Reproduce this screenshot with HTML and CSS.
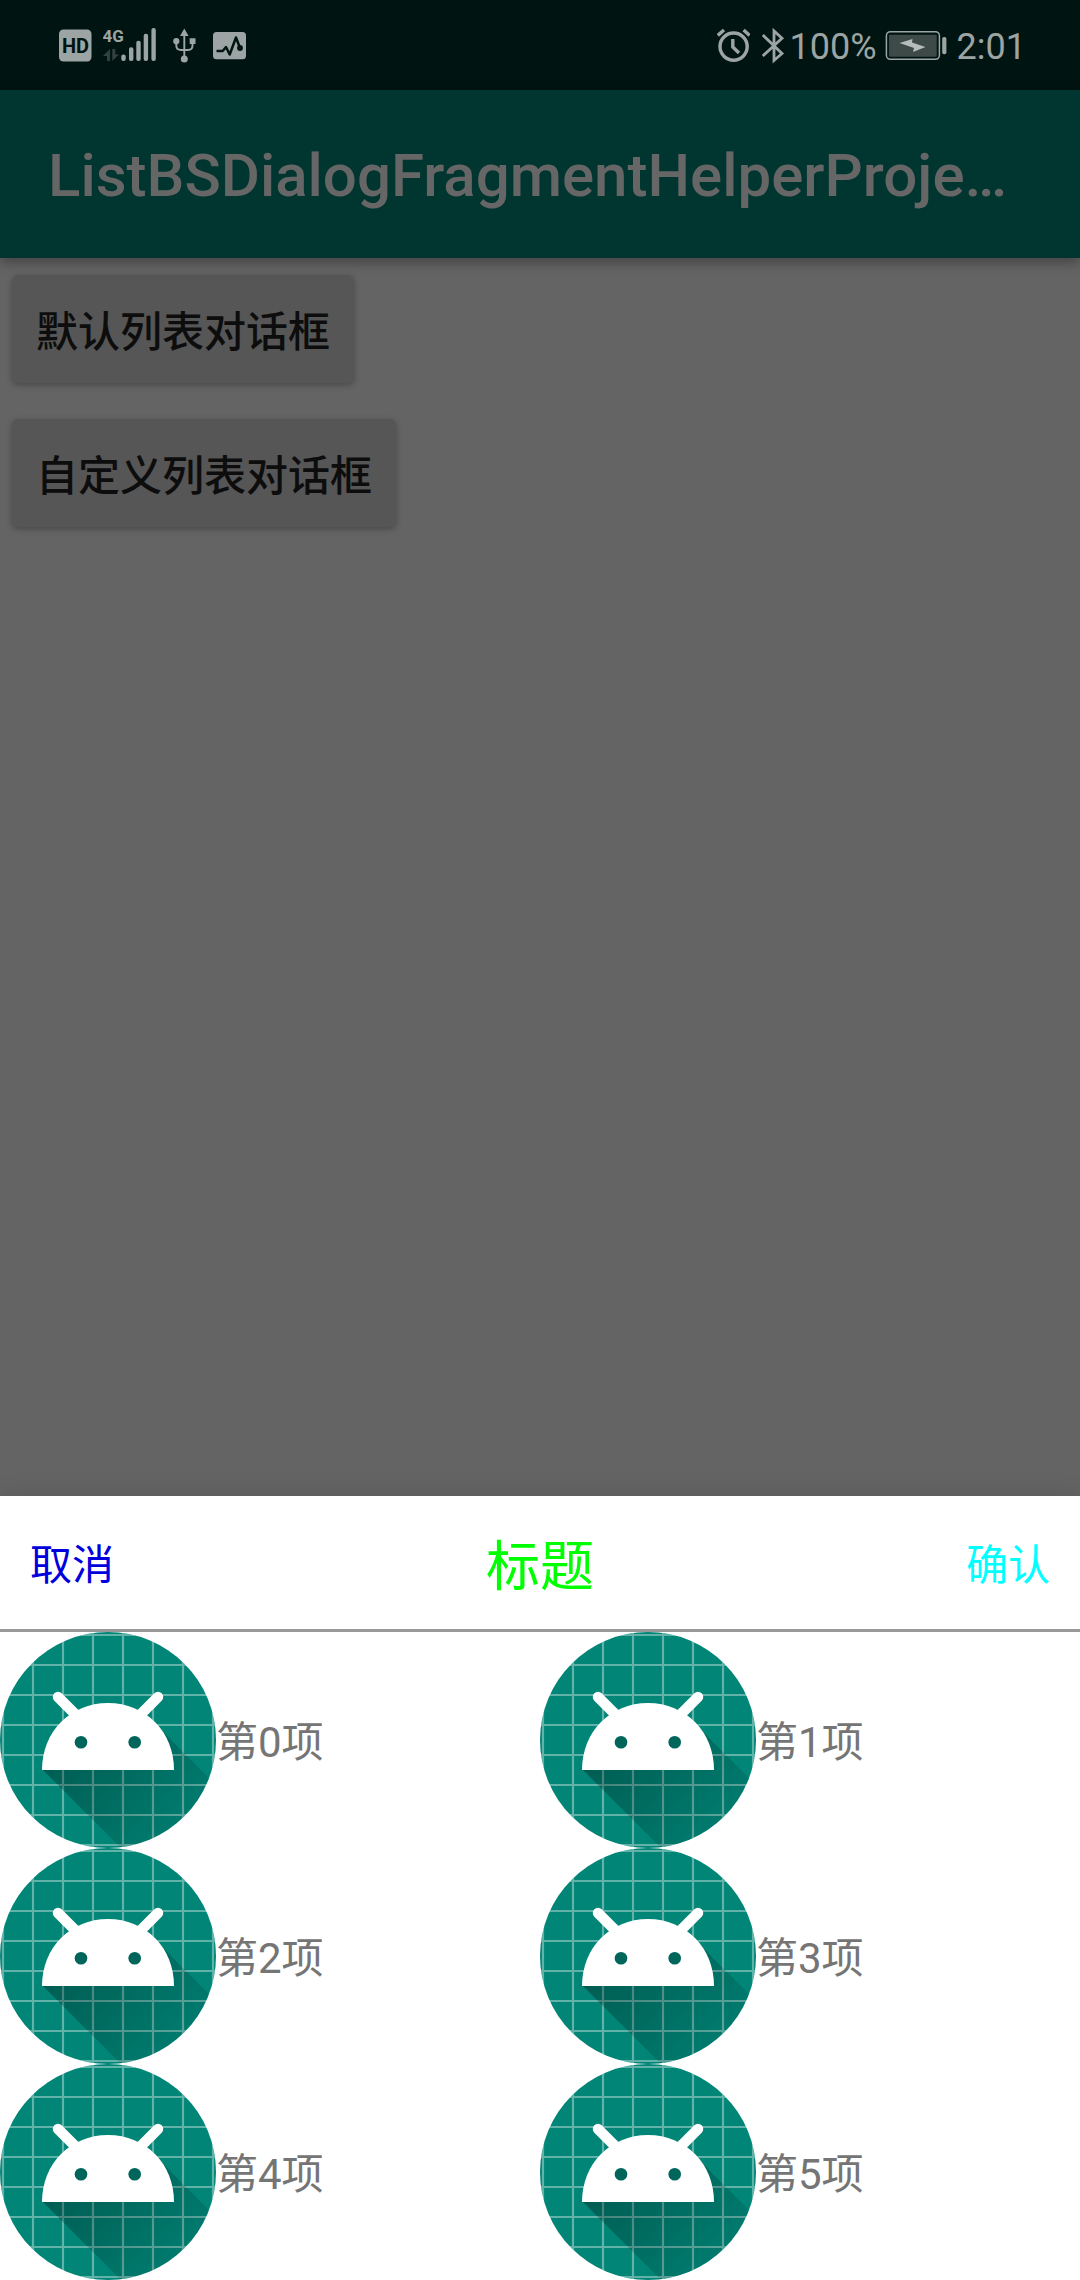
FILE: index.html
```html
<!DOCTYPE html>
<html lang="zh-CN">
<head>
<meta charset="utf-8">
<meta name="viewport" content="width=device-width, initial-scale=1">
<title>ListBSDialogFragmentHelperProject</title>
<link rel="stylesheet" href="styles.css">
</head>
<body>
<svg class="defs" aria-hidden="true">
  <defs>
    <linearGradient id="shade" gradientUnits="userSpaceOnUse" x1="75" y1="105" x2="175" y2="205">
      <stop offset="0" stop-color="#000" stop-opacity=".3"/>
      <stop offset="1" stop-color="#000" stop-opacity=".07"/>
    </linearGradient>
    <clipPath id="disc"><circle cx="108" cy="108" r="108"/></clipPath>
    <symbol id="android" viewBox="0 0 216 216">
      <g clip-path="url(#disc)">
        <rect width="216" height="216" fill="#008577"/>
        <path d="M3 0V216M33 0V216M63 0V216M93 0V216M123 0V216M153 0V216M183 0V216M213 0V216M0 3H216M0 33H216M0 63H216M0 93H216M0 123H216M0 153H216M0 183H216M0 213H216" stroke="#fff" stroke-opacity=".38" stroke-width="2.2" fill="none"/>
        <path d="M42 137L78 90L150 87L279 216V270H175Z" fill="url(#shade)"/>
      </g>
      <path d="M42 138C42 100 70 71 108 71S174 100 174 138Z" fill="#fff"/>
      <path d="M58 65L78 85M158 65L138 85" stroke="#fff" stroke-width="10.5" stroke-linecap="round"/>
      <circle cx="81" cy="110.3" r="6.3" fill="#00655a"/>
      <circle cx="134.7" cy="110.3" r="6.3" fill="#00655a"/>
    </symbol>
  </defs>
</svg>

<div class="screen">
  <div class="status">
    <div class="status-group">
      <svg width="33" height="50" viewBox="59 21 33 50" role="img" aria-label="HD">
        <rect x="59" y="29.5" width="32.5" height="32" rx="4.5" fill="#9ca5a3"/>
        <text class="hd" x="75.5" y="52.5" text-anchor="middle">HD</text>
      </svg>
      <svg width="56" height="50" viewBox="103 21 56 50" role="img" aria-label="4G">
        <text class="net" x="102.5" y="42">4G</text>
        <g fill="#9ca5a3">
          <rect x="121.3" y="54.5" width="4.4" height="6.5" rx="2"/>
          <rect x="129" y="47.3" width="4.4" height="13.7" rx="2"/>
          <rect x="136.3" y="40.7" width="4.4" height="20.3" rx="2"/>
          <rect x="143.7" y="33.7" width="4.4" height="27.3" rx="2"/>
          <rect x="151.4" y="28" width="4.4" height="33" rx="2"/>
        </g>
        <path d="M110 49V61H107V56H103ZM112.3 49H115.3V54.5H119L112.3 61Z" fill="#34423f"/>
      </svg>
      <svg width="29" height="50" viewBox="170 21 29 50" aria-hidden="true">
        <path d="M184.3 34V58M176.3 42V45.5Q176.3 50 181 50H188Q192.5 50 192.5 45.5V42" fill="none" stroke="#9ca5a3" stroke-width="1.9"/>
        <path d="M184.3 28.5L188.6 36H180ZM189.7 38.2H195.5V44H189.7Z" fill="#9ca5a3"/>
        <circle cx="176.3" cy="41.2" r="3.1" fill="#9ca5a3"/>
        <circle cx="184.3" cy="59" r="3.5" fill="#9ca5a3"/>
      </svg>
      <svg width="36" height="50" viewBox="210 21 36 50" aria-hidden="true">
        <rect x="213" y="32" width="33" height="27.3" rx="3.5" fill="#9ca5a3"/>
        <path d="M216.5 51H222.7L226 47L229.7 54.5L236 37.5L240 48" fill="none" stroke="#001411" stroke-width="2.5" stroke-linejoin="round"/>
        <circle cx="240" cy="48" r="2.9" fill="#001411"/>
      </svg>
    </div>
    <div class="status-group status-end">
      <svg width="33" height="50" viewBox="718 21 33 50" aria-hidden="true">
        <g fill="none" stroke="#9ca5a3" stroke-width="3.4">
          <circle cx="734.6" cy="46.6" r="13.6"/>
          <path d="M733.8 39V47L740 53"/>
          <path d="M718.8 35.4L725 30M744.6 30L750.6 35.4"/>
        </g>
      </svg>
      <svg width="28" height="50" viewBox="763 21 28 50" aria-hidden="true">
        <path d="M763.8 35L783 53.5L775 60.5V31L783 38.3L763.8 56" fill="none" stroke="#9ca5a3" stroke-width="2.8"/>
      </svg>
      <span>100%</span>
      <svg class="battery" width="62" height="50" viewBox="885 21 62 50" aria-hidden="true">
        <rect x="886.4" y="31.7" width="53" height="27.6" rx="4" fill="none" stroke="#9ca5a3" stroke-width="1.5"/>
        <rect x="889" y="34.7" width="47.7" height="22" rx="1" fill="#3d4a48"/>
        <path d="M899.5 43L912.5 39L912 42.5L925.5 47L913 52L914 48Z" fill="#b5bcba"/>
        <rect x="942.2" y="37" width="4.2" height="17.3" rx="1.8" fill="#9ca5a3"/>
      </svg>
      <span>2:01</span>
    </div>
  </div>

  <header class="appbar"><h1>ListBSDialogFragmentHelperProje…</h1></header>

  <main class="content">
    <button class="raised" type="button">默认列表对话框</button>
    <button class="raised" type="button">自定义列表对话框</button>
  </main>

  <section class="sheet" role="dialog" aria-labelledby="sheet-title">
    <div class="sheet-head">
      <button class="action cancel" type="button">取消</button>
      <h2 id="sheet-title">标题</h2>
      <button class="action confirm" type="button">确认</button>
    </div>
    <ul class="items">
      <li><svg class="logo" aria-hidden="true"><use href="#android"/></svg><span class="label">第0项</span></li>
      <li><svg class="logo" aria-hidden="true"><use href="#android"/></svg><span class="label">第1项</span></li>
      <li><svg class="logo" aria-hidden="true"><use href="#android"/></svg><span class="label">第2项</span></li>
      <li><svg class="logo" aria-hidden="true"><use href="#android"/></svg><span class="label">第3项</span></li>
      <li><svg class="logo" aria-hidden="true"><use href="#android"/></svg><span class="label">第4项</span></li>
      <li><svg class="logo" aria-hidden="true"><use href="#android"/></svg><span class="label">第5项</span></li>
    </ul>
  </section>
</div>
</body>
</html>
```
FILE: styles.css
```css
* {
  box-sizing: border-box;
}

body {
  margin: 0;
  background: #646464;
  font-family: Roboto, "Noto Sans CJK SC", sans-serif;
  font-size: 42px;
}

button {
  border: 0;
  font: inherit;
  cursor: pointer;
}

svg {
  display: block;
  flex: none;
}

.defs {
  position: absolute;
  width: 0;
  height: 0;
}

.screen {
  display: flex;
  flex-direction: column;
  min-height: 100vh;
}

/* System status bar */
.status {
  display: flex;
  justify-content: space-between;
  align-items: center;
  height: 90px;
  padding: 2px 54px 0 59px;
  background: #001411;
  color: #9ca5a3;
  font-size: 36px;
  line-height: 50px;
}

.status-group {
  display: flex;
  align-items: center;
  gap: 11px;
}

.status-end {
  gap: 0;
}

.status-end svg:first-child {
  margin-right: 12px;
}

.status-end span {
  padding-top: 2px;
}

.battery {
  margin: 0 10px 0 8px;
}

.hd {
  font: bold 20px Roboto, sans-serif;
  fill: #001411;
}

.net {
  font: bold 17px "Liberation Sans Narrow", Roboto, sans-serif;
  fill: #9ca5a3;
}

/* App bar */
.appbar {
  position: relative;
  display: flex;
  align-items: center;
  height: 168px;
  padding: 4px 48px 0;
  background: #003530;
  box-shadow: 0 4px 12px rgba(0, 0, 0, .35);
}

.appbar h1 {
  margin: 0;
  overflow: hidden;
  color: #666;
  font-size: 60px;
  font-weight: 500;
  line-height: 72px;
  white-space: nowrap;
  text-overflow: ellipsis;
}

/* Page content */
.content {
  display: flex;
  flex: 1;
  flex-direction: column;
  align-items: flex-start;
  gap: 36px;
  padding: 17px 12px;
}

.raised {
  height: 108px;
  padding: 0 24px 2px;
  border-radius: 6px;
  background: #565656;
  box-shadow: 0 2px 6px rgba(0, 0, 0, .28);
  color: #0d0d0d;
  font-weight: 500;
}

/* Bottom sheet */
.sheet {
  background: #fff;
  box-shadow: 0 0 24px rgba(0, 0, 0, .12);
}

.sheet-head {
  display: grid;
  grid-template-columns: 1fr auto 1fr;
  align-items: center;
  height: 136px;
  border-bottom: 3px solid #999;
}

.sheet-head h2 {
  margin: 0;
  color: #0f0;
  font-size: 54px;
  font-weight: 400;
}

.action {
  height: 100%;
  padding: 0 30px 2px;
  background: none;
}

.cancel {
  justify-self: start;
  color: #00d;
}

.confirm {
  justify-self: end;
  color: #0ff;
}

.items {
  display: grid;
  grid-template-columns: 1fr 1fr;
  margin: 0;
  padding: 0;
  list-style: none;
}

.items li {
  display: flex;
  align-items: center;
  color: #757575;
}

.label {
  padding-bottom: 4px;
}

.logo {
  width: 216px;
  height: 216px;
}
```
